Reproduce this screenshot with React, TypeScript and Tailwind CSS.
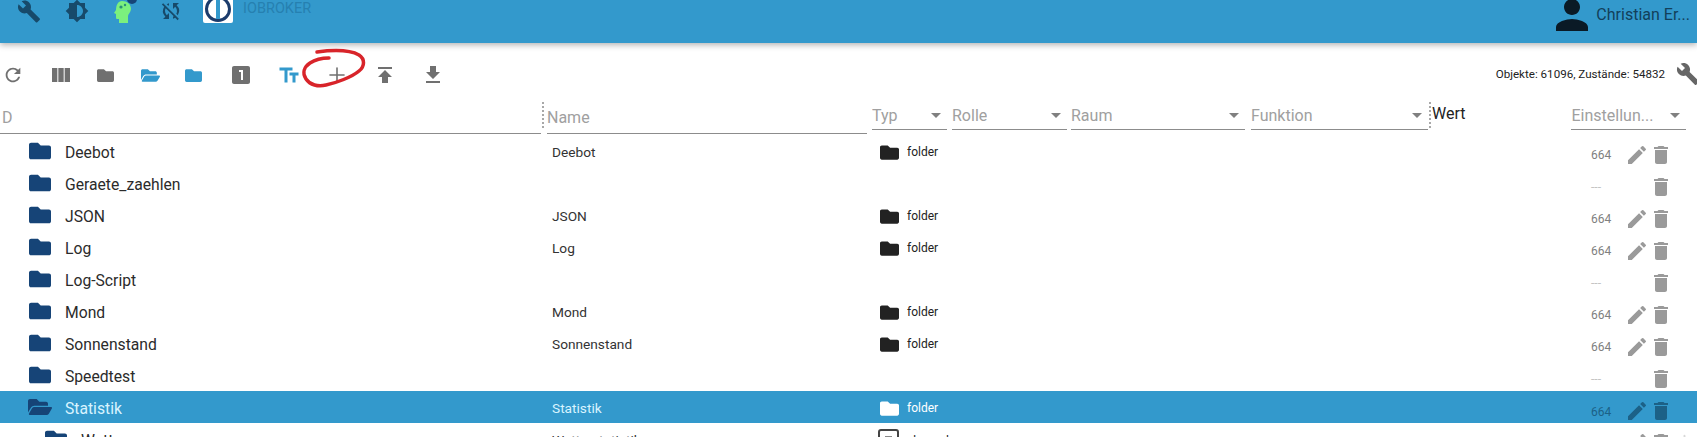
import { ReactNode } from "react";
import { FaFolder, FaFolderOpen } from "react-icons/fa";
import { Plus } from "lucide-react";
import {
  MdBrightness6,
  MdBuild,
  MdDelete,
  MdEdit,
  MdFileDownload,
  MdLooksOne,
  MdPerson,
  MdPublish,
  MdRefresh,
  MdSyncDisabled,
  MdTextFields,
  MdViewColumn,
} from "react-icons/md";

const rows = [
  { id: "Deebot", name: "Deebot", type: "folder", mode: "664" },
  { id: "Geraete_zaehlen", name: "", type: "", mode: "---" },
  { id: "JSON", name: "JSON", type: "folder", mode: "664" },
  { id: "Log", name: "Log", type: "folder", mode: "664" },
  { id: "Log-Script", name: "", type: "", mode: "---" },
  { id: "Mond", name: "Mond", type: "folder", mode: "664" },
  { id: "Sonnenstand", name: "Sonnenstand", type: "folder", mode: "664" },
  { id: "Speedtest", name: "", type: "", mode: "---" },
];

const TopIcon = ({ className, children }: { className: string; children: ReactNode }) => (
  <div className={`flex h-[22px] w-6 items-center justify-center ${className}`}>{children}</div>
);

const ToolIcon = ({ className, children }: { className: string; children: ReactNode }) => (
  <div className={`flex size-6 items-center justify-center ${className}`}>{children}</div>
);

const Caret = () => <span className="mr-[6px] ml-auto size-0 border-x-[5px] border-t-[5px] border-x-transparent border-t-[#808080]" />;

const HeadSelect = ({ label, className }: { label: string; className: string }) => (
  <div className={`flex h-[28px] items-center border-b border-[#8c8c8c] text-base text-[#a0a0a0] ${className}`}>
    <span className="truncate">{label}</span>
    <Caret />
  </div>
);

const Divider = ({ className }: { className: string }) => (
  <div className={`h-[26px] w-0 self-start border-l-2 border-dotted border-[#a8a8a8] ${className}`} />
);

const Actions = ({ mode, selected, plus }: { mode: string; selected?: boolean; plus?: boolean }) => (
  <div className={`ml-auto flex w-[105px] items-center pt-[7px] ${selected ? "text-[#1c6187]" : "text-[#9a9a9a]"}`}>
    <span className={`w-[34px] text-xs ${selected ? "pt-[2px] text-[#1c6187]" : mode === "---" ? "text-[#c4c4c4]" : "text-[#808080]"}`}>{mode}</span>
    {mode !== "---" ? <MdEdit size={24} /> : <span className="w-6" />}
    <MdDelete size={24} />
    {plus && <Plus size={23} className="text-[#d8d8d8]" />}
  </div>
);

const Row = ({ id, name, type, mode }: { id: string; name: string; type: string; mode: string }) => (
  <div className="flex h-8 items-center pr-[1px]">
    <div className="flex w-[552px] items-center pl-[29px] text-[15.7px] text-[#2b2b2b]">
      <FaFolder size={22} className="text-[#164477]" />
      <span className="ml-[14px] pt-[3px]">{id}</span>
    </div>
    <div className="w-[328px] pt-[3px] text-[13.7px] text-[#333]">{name}</div>
    {type && (
      <div className="flex items-center pt-[2px] text-xs text-[#222]">
        <FaFolder size={19} className="text-[#222]" />
        <span className="ml-2">{type}</span>
      </div>
    )}
    <Actions mode={mode} />
  </div>
);

export default function App() {
  return (
    <div className="relative h-[437px] w-[1697px] overflow-hidden bg-white font-['Roboto',sans-serif]">
      <header className="flex h-[43px] bg-[#3399cc] shadow-[0_2px_6px_rgba(0,0,0,0.3)]">
        <TopIcon className="ml-[17px]">
          <MdBuild size={25} className="text-[#174a6a]" />
        </TopIcon>
        <TopIcon className="ml-[24px]">
          <MdBrightness6 size={26} className="text-[#174a6a]" />
        </TopIcon>
        <TopIcon className="ml-[23px]">
          <svg width="24" height="24" viewBox="0 0 24 24" className="mt-[1px] overflow-visible">
            <path d="M10 1c5 0 9 3 9 8 0 3-3 5-3 7v7H7v-4H5c-1 0-1-1-1-2v-3l-2-1 2-3C4 5 6 1 10 1z" fill="#7bf07e" />
            <circle cx="9" cy="7" r="1.6" fill="#2a8f7a" />
            <circle cx="13" cy="5" r="1.2" fill="#2a8f7a" />
            <circle cx="20" cy="-1" r="5" fill="#164477" />
          </svg>
        </TopIcon>
        <TopIcon className="ml-[23px]">
          <MdSyncDisabled size={24} className="text-[#174a6a]" />
        </TopIcon>
        <div className="ml-[20px] flex h-[23px] w-[30px] items-end justify-center overflow-hidden rounded-b-[2px] bg-white">
          <div className="mb-[1px] flex size-[26px] shrink-0 items-center justify-center rounded-full border-[3px] border-[#1c3c6c]">
            <div className="h-full w-[4px] bg-[#3399cc]" />
          </div>
        </div>
        <span className="ml-[10px] -mt-[1px] h-5 text-[14.5px] leading-5 text-[#2680b0]">IOBROKER</span>
        <div className="ml-auto flex h-[29px] items-center pr-[7px]">
          <MdPerson size={48} className="text-[#0a1a26]" />
          <span className="text-base text-[#12405a]">Christian Er...</span>
        </div>
      </header>

      <div className="flex h-[59px] items-center pt-[5px] pl-[1px] text-[#707070]">
        <ToolIcon className="">
          <MdRefresh size={22} />
        </ToolIcon>
        <ToolIcon className="ml-[24px]">
          <MdViewColumn size={26} />
        </ToolIcon>
        <ToolIcon className="ml-[20px]">
          <FaFolder size={17} />
        </ToolIcon>
        <ToolIcon className="ml-[21px] text-[#3399cc]">
          <FaFolderOpen size={19} />
        </ToolIcon>
        <ToolIcon className="ml-[19px] text-[#3399cc]">
          <FaFolder size={17} />
        </ToolIcon>
        <ToolIcon className="ml-[24px]">
          <MdLooksOne size={24} />
        </ToolIcon>
        <ToolIcon className="ml-[24px] text-[#3399cc]">
          <MdTextFields size={25} />
        </ToolIcon>
        <ToolIcon className="ml-[24px]">
          <Plus size={24} strokeWidth={1.6} />
        </ToolIcon>
        <ToolIcon className="ml-[24px]">
          <MdPublish size={24} />
        </ToolIcon>
        <ToolIcon className="ml-[24px]">
          <MdFileDownload size={24} />
        </ToolIcon>
        <span className="ml-auto text-[11.6px] text-[#222]">Objekte: 61096, Zustände: 54832</span>
        <MdBuild size={24} className="ml-[11px] -mr-[3px] mt-[-2px] shrink-0 text-[#666]" />
      </div>

      {/* red marker scribble someone drew on the screenshot */}
      <svg className="absolute top-0 left-0" width="400" height="100" fill="none">
        <path
          d="M329 58 C322 58 316 59 310 63 C304 67 302 73 306 79 C310 85 318 87 326 85 C336 83 352 77 359 71 C365 66 365 59 359 55 C350 50 332 50 317 52"
          stroke="#d8242a"
          strokeWidth="3.5"
          strokeLinecap="round"
        />
      </svg>

      <div className="flex h-[32px] items-end">
        <div className="flex h-[32px] w-[541px] items-center border-b border-[#8c8c8c] pl-[2px] text-base text-[#a0a0a0]">D</div>
        <Divider className="ml-[1px]" />
        <div className="ml-[3px] flex h-[32px] w-[320px] items-center border-b border-[#8c8c8c] text-base text-[#a0a0a0]">Name</div>
        <div className="flex h-[29px] self-start">
          <HeadSelect label="Typ" className="ml-[5px] w-[75px]" />
          <HeadSelect label="Rolle" className="ml-[5px] w-[115px]" />
          <HeadSelect label="Raum" className="ml-[4px] w-[174px]" />
          <HeadSelect label="Funktion" className="ml-[6px] w-[177px]" />
          <Divider className="ml-[1px]" />
          <span className="ml-[1px] h-6 text-base leading-6 text-[#222]">Wert</span>
          <HeadSelect label="Einstellun..." className="ml-[106px] w-[115px]" />
        </div>
      </div>

      <div className="pt-[1px]">
        {rows.map((row) => (
          <Row key={row.id} {...row} />
        ))}
        <div className="flex h-8 items-center bg-[#3399cc] pr-[1px]">
          <div className="flex w-[552px] items-center pl-[28px] text-[15.7px] text-[#d9f4ff]">
            <FaFolderOpen size={24} className="text-[#164477]" />
            <span className="ml-[13px] pt-[3px]">Statistik</span>
          </div>
          <div className="w-[328px] pt-[3px] text-[13.7px] text-[#d9f4ff]">Statistik</div>
          <div className="flex items-center pt-[2px] text-xs text-white">
            <FaFolder size={19} />
            <span className="ml-2">folder</span>
          </div>
          <Actions mode="664" selected />
        </div>
        <div className="flex h-8 items-center pr-[1px]">
          <div className="flex w-[552px] items-center pl-[45px] text-[15.7px] text-[#2b2b2b]">
            <FaFolder size={22} className="text-[#164477]" />
            <span className="ml-[14px] pt-[3px]">Wetter</span>
          </div>
          <div className="w-[326px] pt-[3px] text-[13.7px] text-[#333]">Wetterstatistik</div>
          <div className="flex items-center text-xs text-[#222]">
            <div className="flex size-[21px] items-center justify-center rounded-[3px] border-2 border-[#444]">
              <div className="size-[7px] bg-[#888]" />
            </div>
            <span className="ml-2 pt-[3px]">channel</span>
          </div>
          <Actions mode="664" plus />
        </div>
      </div>
    </div>
  );
}
